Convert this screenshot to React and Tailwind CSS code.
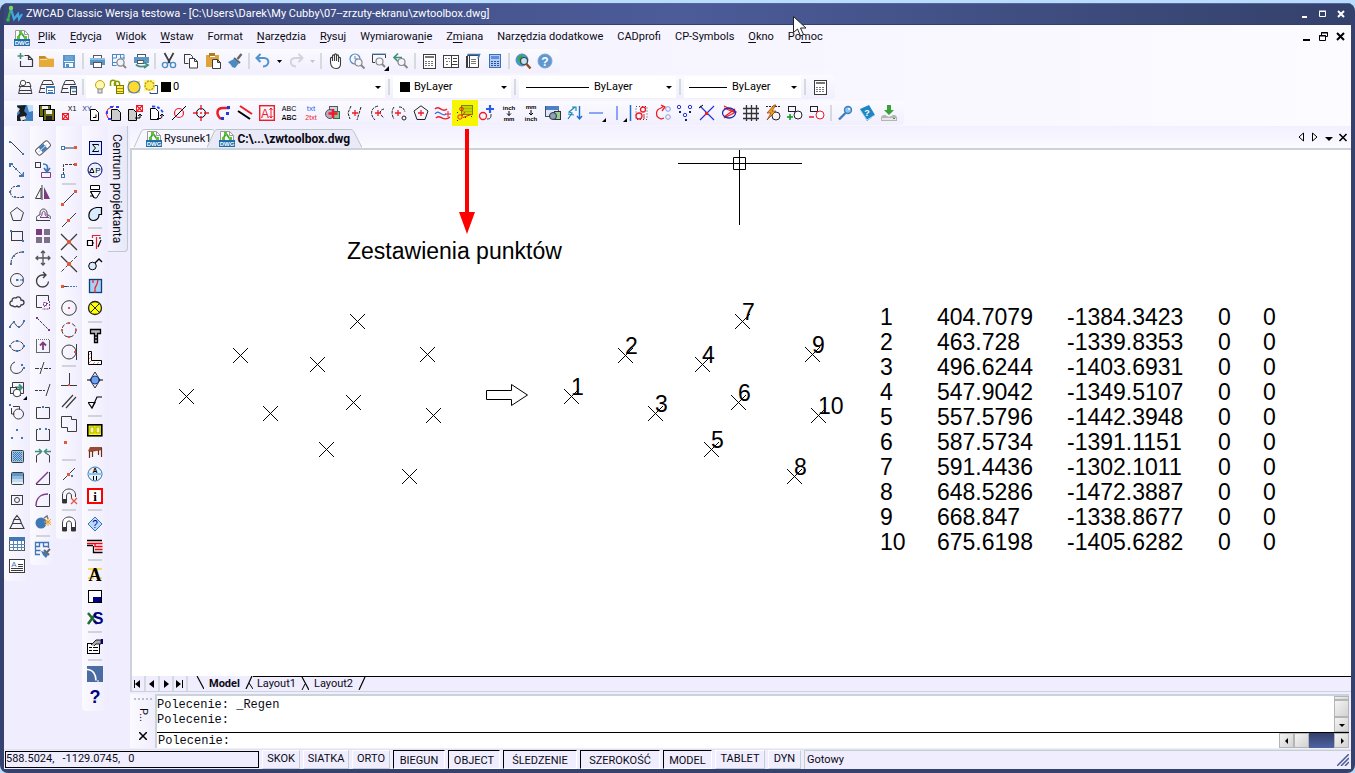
const INK = "#3c3c3c";
const BLUE = "#3f78b5";
const PLUM = "#7d3c82";
const CORAL = "#dd5a3c";
const RED = "#ee1c24";

function P({ d, c = INK, w = 1, f = "none", dash }) {
    return <path d={d} stroke={c} strokeWidth={w} fill={f} strokeDasharray={dash} />;
}

function F({ d, c = INK }) {
    return <path d={d} fill={c} />;
}

function R({ x, y, w = 2, h = w, c = "none", f = "none", s = 1 }) {
    return <rect x={x} y={y} width={w} height={h} stroke={c} strokeWidth={s} fill={f} />;
}

function C({ x, y, r, c = INK, f = "none", w = 1, dash }) {
    return <circle cx={x} cy={y} r={r} stroke={c} strokeWidth={w} fill={f} strokeDasharray={dash} />;
}

function T({ x = 8, y, s, c = "#000", b, serif, children }) {
    return (
        <text
            x={x}
            y={y}
            fontSize={s}
            fill={c}
            textAnchor="middle"
            fontWeight={b ? 700 : 400}
            fontFamily={serif ? "Liberation Serif, serif" : "Liberation Sans, sans-serif"}
        >
            {children}
        </text>
    );
}

// All glyphs are drawn on a 16px grid
const icons = {
    dwg: (
        <>
            <P d="M1.5 .5h9l4 4v11h-13z" c="#9a9a9a" f="#fff" />
            <P d="M10.5 .5v4h4" c="#9a9a9a" />
            <P d="M4 8L7 2.500l4 5.500" c="#3aa535" w={1.8} />
            <F d="M5 1h3v3H5zM10 6h3v3h-3zM3 6h3v3H3z" c="#5cc42e" />
            <R x={0} y={9} w={16} h={7} f="#1e6dad" />
            <T y={15} s={6} c="#fff" b>DWG</T>
        </>
    ),
    logo: (
        <>
            <P d="M5 2L2 14" c="#39b54a" w={2.2} />
            <P d="M5 3l3 10 4-5 1 5 3-5" c="#3fa9e0" w={2.2} />
            <C x={5} y={2} r={2.2} c="none" f="#7ed957" />
            <C x={2} y={14} r={1.8} c="none" f="#39b54a" />
        </>
    ),
    newFile: (
        <>
            <P d="M3.5 8v5.5h12v-7l-4-4h-4M11.5 2.5v4h4" w={1.2} />
            <P d="M3.5 0v6M.5 3h6" c="#3f917b" w={1.6} />
        </>
    ),
    open: (
        <>
            <F d="M0 3h6l2 2h6v2H0z" c="#c98c22" />
            <F d="M0 6l8-1h7v9H0z" c="#e6aa37" />
            <P d="M1 6.5h7l1-1h6" c="#f7dca4" />
        </>
    ),
    save: (
        <>
            <F d="M2 2h12v13H2z" c="#5593c9" />
            <R x={4} y={3} w={8} h={4} f="#6ba5d8" />
            <R x={3} y={8} w={10} h={1} f="#e9f3fb" />
            <R x={4} y={10} w={8} h={4} f="#fff" />
            <R x={5} y={11} w={3} h={3} f="#5593c9" />
        </>
    ),
    print: (
        <>
            <R x={4.5} y={2.5} w={8} h={3} c="#555" f="#fff" />
            <R x={1} y={5} w={15} h={7} f="#5b96c9" />
            <R x={1} y={5} w={15} h={2} f="#8fbce2" />
            <R x={4.5} y={9.5} w={8} h={5} c="#555" f="#fff" />
        </>
    ),
    preview: (
        <>
            <P d="M1.5 1v12M1 1.5h12v5M5.5 1v4h-4M9.5 1v4h4M1 9.5h5M1.5 12.5h4" c="#4b8bc4" />
            <C x={9.5} y={9.5} r={3.6} c="#888" w={1.3} f="#eef4fb" />
            <P d="M12 12l3 3" c="#888" w={2} />
        </>
    ),
    publish: (
        <>
            <R x={4.5} y={1.5} w={8} h={3} c="#555" f="#fff" />
            <R x={1} y={4} w={15} h={6} f="#5b96c9" />
            <R x={4.5} y={7.5} w={6} h={3} c="#555" f="#fff" />
            <P d="M3 11.500c2 3 6 2.500 12 1M10 9l5 3-4 3" c="#3f917b" w={1.8} />
        </>
    ),
    cut: (
        <>
            <P d="M3.500 0l5.500 10M12.500 0L7 10" w={1.7} />
            <C x={4} y={12} r={2.6} c="#4b8bc4" w={1.4} />
            <C x={12} y={12} r={2.6} c="#4b8bc4" w={1.4} />
        </>
    ),
    copy: (
        <>
            <P d="M1.500 1.500h6l2 2v2M1.500 1v9.500h4" />
            <P d="M6.500 5.500h5l3 3v6.500h-8zM11.500 5.500v3h3" f="#fff" />
        </>
    ),
    paste: (
        <>
            <R x={1} y={2} w={13} h={12} f="#e0a23a" />
            <R x={4} y={0} w={6} h={4} f="#b07b22" />
            <R x={5} y={3} w={5} h={1} f="#fff" />
            <P d="M7.500 6.500h5l3 3v6h-8zM12.500 6.500v3h3" f="#fff" />
        </>
    ),
    brush: (
        <>
            <P d="M14.500 1l-4 5" c="#666" w={2.4} />
            <P d="M7 5l6 5" c="#666" w={2} />
            <F d="M1 9l6-3 5 4-4 5-3-1-1-2z" c="#4b8bc4" />
        </>
    ),
    undo: <P d="M5.500 1L1.500 5l4 4M2 5h7c6 0 6 8-1 8.500" c="#4f94cd" w={2} />,
    redo: <P d="M10.500 1l4 4-4 4M14 5H8c-7 0-7 8 0 8.500" c="#d3d3da" w={2} />,
    hand: <P d="M3.500 10V5.500c0-1.500 2-1.500 2 0V8 3c0-1.500 2-1.500 2 0v5-6c0-1.500 2-1.500 2 0v6-5c0-1.500 2-1.500 2 0v6-3.500c0-1.500 2-1.500 2 0V11c0 3-2 4.500-4.500 4.500-4 0-5-2.500-5.500-5.500z" f="#fff" w={1.1} />,
    zoomRt: (
        <>
            <C x={6} y={6} r={5} c="#4b8bc4" w={1.2} />
            <P d="M6 3v3h3" c="#4b8bc4" />
            <C x={9.500} y={9.500} r={3.500} c="#888" w={1.2} f="#f4f4fb" />
            <P d="M12 12l3.500 3.500" c="#888" w={2} />
        </>
    ),
    zoomWin: (
        <>
            <P d="M14.500 5V1.500h-13v8H4" c={INK} />
            <P d="M1 1h14" c="#4b8bc4" />
            <C x={8.500} y={8.500} r={3.500} c="#888" w={1.2} f="#f4f4fb" />
            <P d="M11 11l3 3" c="#888" w={2} />
            <F d="M18 13v5h-5z" c="#000" />
        </>
    ),
    zoomPrev: (
        <>
            <P d="M1 4.500h8M5 .5l-4 4 4 4" c="#3f917b" w={1.7} />
            <C x={8.500} y={9} r={3.500} c="#888" w={1.2} f="#f4f4fb" />
            <P d="M11 11.500l3.500 3.500" c="#888" w={2} />
        </>
    ),
    props: (
        <>
            <R x={2.500} y={1.500} w={12} h={14} c={INK} f="#fff" />
            <P d="M4 4h9" w={2} c="#777" />
            <P d="M4 8.500h9M4 10.500h9M4 12.500h9" dash="2 1" c="#777" />
        </>
    ),
    designCenter: (
        <>
            <R x={.5} y={2.500} w={15} h={12} c={INK} f="#fff" />
            <P d="M8.500 2v13M10 5.500h4M10 8.500h4M8.500 11.500h6" />
            <P d="M2 5.500h5M3 8.500h4M3 11.500h3" c="#777" dash="2 1" />
        </>
    ),
    palette: (
        <>
            <P d="M2.500 2.500h11v12h-11z" f="#fff" />
            <P d="M2.500 1.500h12l-1.500 4" c={BLUE} w={1.6} />
            <P d="M1.500 3v12M4.500 3v11" c={INK} />
            <P d="M6 6.500h5M6 8.500h5M6 10.500h5" c="#777" />
        </>
    ),
    calc: (
        <>
            <R x={2.500} y={1.500} w={11} h={13} c="#3d6fc0" f="#b4cdf4" />
            <R x={4} y={3} w={8} h={3} f="#5e8fdb" />
            <P d="M4 8.500h8M4 10.500h8M4 12.500h8" c="#27519a" dash="2 1" />
        </>
    ),
    globe: (
        <>
            <C x={7} y={7} r={6} c="#6b7fb0" f="#2aa7c9" />
            <F d="M3 4l4-2 2 3-3 4-3-1z" c="#36a653" />
            <C x={9} y={8} r={3.500} c="#444" f="#bfe3f2" w={1.2} />
            <P d="M11.500 11l4 4.500" c="#8a4b23" w={2.400} />
        </>
    ),
    help: (
        <>
            <C x={8} y={8} r={7} c="#7aa8d6" f="#5e98cf" />
            <T y={12.500} s={12} c="#fff" b>?</T>
        </>
    ),
    layerA: (
        <>
            <P d="M9.500 3.500h3l1.500 4H2l1-2M3.500 7.500l-1.500 4h12.500l-1.500-4M2.500 11.500l-1 3h13.500l-1-3" />
            <C x={6} y={4} r={2.700} c="#4a4a4a" f="#fff" />
        </>
    ),
    layerB: (
        <>
            <P d="M4.500 1.500h8l2 4h-12zM2.500 5.500l-1.500 4h5M1.500 9.500L0 13.500h6" />
            <R x={7.500} y={7.500} w={8} h={7} c={BLUE} f="#fff" />
            <P d="M7 8.500h9M9 11.500h5M9 13.500h5" c={BLUE} />
        </>
    ),
    layerC: (
        <>
            <P d="M4.500 1.500h8l2 4h-12zM2.500 5.500l-1.500 4h6M1.500 9.500L0 13.500h8" />
            <R x={9.500} y={7.500} w={6} h={8} c={INK} f="#fff" />
            <P d="M10 9h5M11 12.500h4" c={BLUE} w={1.500} />
        </>
    ),
    bulb: (
        <>
            <C x={8} y={6} r={4.500} c="#c7a300" f="#fff9b0" />
            <R x={6} y={10} w={4} h={4} c="#888" f="#ddd" />
        </>
    ),
    lock: (
        <>
            <P d="M1.500 7V3.500c0-3 5-3 5 0V7M5.500 7V4.500c0-3 5-3 5 0V7" c="#8a9a00" w={1.500} />
            <R x={7.500} y={6.500} w={7} h={8} c="#7a7a00" f="#ffe94d" />
            <P d="M8 9.500h6M8 12.500h6" c="#a69200" />
        </>
    ),
    sun: (
        <>
            <F d="M2 2h12v12H2z" c="#ffe24d" />
            <C x={8} y={8} r={6} c="#4f7fb3" f="#ffd92e" w={1.200} />
        </>
    ),
    freeze: (
        <>
            <R x={1} y={1} w={11} f="#fff3a0" />
            <C x={6.500} y={6.500} r={4.500} c="#b7a500" f="#ffe95c" dash="2 1" w={1.500} />
            <P d="M12 6.500h2.500v8H7V13" c="#2d4c86" />
        </>
    ),
    earthSave: (
        <>
            <R x={0} y={0} w={16} f="#3d7fc2" />
            <F d="M0 1l9-1-2 6 3 3-3 7H0v-5l3-3z" c="#1a1d22" />
            <F d="M10 0h6v6l-4 1z" c="#bfe0f8" />
            <F d="M0 2l3 2-3 4zM3 12l5-1 1 3-5 2z" c="#e8e8e8" />
        </>
    ),
    saveAll: (
        <>
            <R x={.5} y={.5} w={11} h={11} c="#000" f="#6b6b12" />
            <R x={3} y={1} w={6} h={3} f="#eee" />
            <R x={4.500} y={4.500} w={11} h={11} c="#000" f="#6b6b12" />
            <R x={7} y={5} w={6} h={4} f="#eee" />
            <R x={7} y={11} w={6} h={4} f="#222" />
        </>
    ),
    pointX: (
        <>
            <R x={1.500} y={8.500} w={6} c={RED} />
            <P d="M2 9l5 5M7 9l-5 5" c={RED} w={1.300} />
            <T x={11} y={6} s={7}>X1</T>
        </>
    ),
    xyPage: (
        <>
            <T x={4} y={6} s={7} c="#1b2f8f">XY</T>
            <P d="M7.500 4.500h5l3 3v8h-8zM10 12.500h3v-3" f="#fff" c="#000" />
        </>
    ),
    pageCycle: (
        <>
            <P d="M6.500 4.500h6l3 3v8h-9z" c="#000" f="#ccc" />
            <P d="M9 1L3 4 1 8l2 5 4 2" c={RED} />
            <F d="M5 1h3v2H5zM11 1h3v2h-3zM1 6h2v3H1zM3 13h3v2H3z" c="#2645ff" />
        </>
    ),
    pageRed: (
        <>
            <P d="M1.500 4.500h5l3 3v8h-8z" c="#000" f="#ccc" />
            <R x={9.500} y={.5} w={6} c={RED} />
            <P d="M10 1l5 5M15 1l-5 5" c={RED} w={1.300} />
            <P d="M8 13h5v-4M11 11l2-2 2 2" c="#000" />
        </>
    ),
    pageArc: (
        <>
            <P d="M1.500 3.500h5l3 3v8h-8z" c="#000" f="#fff" />
            <P d="M3 1.500c5 0 8 1 11 6" c="#2645ff" w={1.800} dash="3 2" />
            <P d="M8 13.500h3c2 0 2-2 2-4M11 11l2-2 2 2" c="#000" />
        </>
    ),
    slashCircle: (
        <>
            <C x={8} y={8} r={4.500} c={RED} w={1.200} />
            <P d="M1 15L15 1" c="#000" />
        </>
    ),
    target: (
        <>
            <C x={8} y={8} r={4.500} c="#000" />
            <P d="M8 0v5M8 11v5M0 8h5M11 8h5M7 8h2" c={RED} w={1.400} />
        </>
    ),
    arcDots: (
        <>
            <P d="M14 3H8C1 3 1 10 6 14" c={RED} w={2.500} />
            <R x={12} y={1} w={3} f="#1b3bd6" />
            <R x={6} y={12} w={3} f="#1b3bd6" />
            <R x={11} y={7} w={3} f="#1b3bd6" />
        </>
    ),
    twoLines: (
        <>
            <P d="M3 1l12 8" c={RED} w={2} />
            <P d="M1 6l12 8" c="#000" w={2} />
        </>
    ),
    textHeight: (
        <>
            <R x={.7} y={.7} w={14.600} c={RED} s={1.400} />
            <T x={6} y={12.500} s={12} c={RED}>A</T>
            <P d="M12 3v10M10.500 5L12 3l1.500 2M10.500 11l1.500 2 1.500-2" c={RED} />
        </>
    ),
    abc: (
        <>
            <T y={6} s={7}>ABC</T>
            <T y={15} s={7} b>ABC</T>
            <P d="M0 12h16" c="#fff" w={.6} />
        </>
    ),
    txt2txt: (
        <>
            <T y={6} s={8} c="#1f6bf0">txt</T>
            <T y={15} s={7} c={RED}>2txt</T>
        </>
    ),
    shapesPlus: (
        <>
            <R x={4.500} y={1.500} w={8} c="#555" f="#c9d3ea" />
            <C x={5} y={9} r={4.500} c="#555" f="#b9a9c9" />
            <R x={8.500} y={6.500} w={6} h={7} c="#386b46" f="#8fc29b" />
            <P d="M8 4v9M3.500 8.500h9" c={RED} w={2.600} />
        </>
    ),
    plusLine: (
        <>
            <P d="M4 1L1 8l2 6M14 2l-4 13" c="#222" dash="3 1" />
            <P d="M8 5v6M5 8h6" c={RED} w={1.300} />
        </>
    ),
    plusArc: (
        <>
            <P d="M9 1C1 3 1 10 6 15M15 4c-5 1-5 5 0 9" c="#222" dash="3 1" />
            <P d="M9 5v6M6 8h6" c={RED} w={1.300} />
        </>
    ),
    plusPoly: (
        <>
            <P d="M3 2C0 6 1 11 3 14M8 2c4 0 5 2 6 5" c="#222" dash="3 1" />
            <P d="M7 5v6M4 8h6" c={RED} w={1.300} />
            <C x={13} y={13} r={2} c="#222" />
        </>
    ),
    plusPent: (
        <>
            <P d="M8 .8l7 5.200-3 8.500H4L1 6z" c="#222" />
            <P d="M8 5v6M5 8h6" c={RED} w={1.300} />
        </>
    ),
    waves: (
        <>
            <P d="M0 4c4-5 7 5 12 0M1 13c4-5 7 5 14-1" c={RED} w={1.400} />
            <P d="M0 9c4-6 7 4 11 0" c="#3a6be0" w={1.200} />
            <P d="M13 6v6M10 9h6" c={RED} />
        </>
    ),
    pointTable: (
        <>
            <R x={4.500} y={.5} w={11} h={9} c="#77890a" f="#c6d400" />
            <P d="M5 3.500h10M5 6.500h10" c="#a9b800" />
            <C x={3} y={12} r={2.200} c={RED} />
            <C x={4.500} y={4} r={1.800} c={RED} />
            <P d="M5 11l3-4M6 12.500l8-3" c={RED} />
            <F d="M0 7h1v1H0zM8 12h1v1H8zM14 11h1v1h-1zM0 15h1v1H0z" c="#333" />
        </>
    ),
    circPlus: (
        <>
            <C x={4} y={11} r={3.500} c={RED} w={1.300} />
            <P d="M11 0v8M7 4h8" c="#2a5be8" w={2.200} />
            <P d="M8 14c4 0 4-2 4-5" c="#333" />
        </>
    ),
    inchMm: (
        <>
            <T y={5} s={6} b>inch</T>
            <P d="M8 6v4.500M6 8.500l2 2 2-2" c="#000" />
            <T y={16} s={6} b>mm</T>
        </>
    ),
    mmInch: (
        <>
            <T y={4} s={6} b>mm</T>
            <P d="M8 5v5M6 8l2 2 2-2" c="#000" />
            <T y={16} s={6} b>inch</T>
        </>
    ),
    tableShapes: (
        <>
            <R x={.5} y={1.500} w={13} h={10} c="#41506b" f="#dfe8f6" />
            <R x={1} y={1} w={13} h={4} f="#4f7fc8" />
            <R x={9.500} y={6.500} w={6} h={8} c="#333" f="#9c9" />
            <C x={8} y={11} r={3.500} c="#333" f="#8aa1bf" />
        </>
    ),
    zigzag: (
        <>
            <P d="M1 14l4-6-3-1 6-5M1 9l6 1M5 2h4v4" c="#1d87b8" w={1.200} />
            <P d="M12.500 1v12M10 11l2.500 3 2.500-3" c="#1c6fd0" w={1.400} />
        </>
    ),
    hLine: (
        <>
            <P d="M0 8h14" c="#8aa5f5" w={2} />
            <F d="M17 13v4h-4z" c="#000" />
        </>
    ),
    vLine: (
        <>
            <P d="M6 1v14" c="#8aa5f5" w={2} />
            <F d="M16 13v4h-4z" c="#000" />
        </>
    ),
    barCircles: (
        <>
            <P d="M-2.500 0v16" c="#1c6fd0" w={1.500} />
            <P d="M3 1.500h11v13H3z" c="#444" dash="1 2" />
            <C x={10} y={4.500} r={2.500} c={RED} w={1.300} />
            <C x={6} y={11} r={3} c={RED} w={1.300} />
            <P d="M11 9v5" c={RED} />
        </>
    ),
    rotateCircles: (
        <>
            <P d="M9 1l-3 2C0 5 0 12 6 14l3-1M6 0l4 2-3 4" c={RED} w={1.300} />
            <C x={13} y={4} r={2.300} c="#8098ee" />
            <C x={13} y={12} r={2.300} c="#9a9ad0" />
        </>
    ),
    dots: (
        <>
            {[[2, 2], [13, 2], [8, 10]].map(([x, y]) => (
                <C key={`${x}-${y}`} x={x} y={y} r={1.700} c="#2434d8" />
            ))}
            <F d="M2 6h2v2H2zM12 6h2v2h-2zM8 14h2v2H8z" c="#1b1b60" />
        </>
    ),
    crossX: (
        <>
            <P d="M1 1l14 14M15 1L1 15" c="#2434d8" w={1.200} />
            <P d="M0 3l4-3" c="#000" />
            <R x={6} y={7} w={3} f={RED} />
        </>
    ),
    eyeLines: (
        <>
            <P d="M3 1l12 6-12 6M3 3l12 5M3 12l11-8" c={RED} w={1.300} />
            <ellipse cx="8" cy="8" rx="6.500" ry="5" stroke="#1b2fb5" fill="none" strokeWidth="1.300" />
        </>
    ),
    grid: <P d="M3.500 0v16M8.500 0v16M13.500 0v16M0 3.500h16M0 8.500h16M0 13.500h16" c="#333" w={1.300} />,
    flash: (
        <>
            <C x={11} y={11} r={4} c="#222" />
            <P d="M1 1.500h14" c="#222" dash="2 1" />
            <F d="M9 0L2 8h4l-4 7 9-9H7l4-6z" c="#f29c1f" />
            <P d="M9 0L2 8h4l-4 7 9-9H7l4-6z" c="#8a3a10" w={.7} />
        </>
    ),
    addBlock: (
        <>
            <R x={1.500} y={1.500} w={7} h={5} c="#222" dash="2 1" />
            <C x={11} y={10} r={4} c="#222" f="#fff" />
            <P d="M3 9v6M0 12h6" c="#0a9a1c" w={1.500} />
        </>
    ),
    removeBlock: (
        <>
            <R x={1.500} y={1.500} w={7} h={5} c="#222" />
            <C x={11} y={10} r={4} c={RED} f="#fff" />
            <P d="M0 12h5" c={RED} w={1.500} />
        </>
    ),
    key: (
        <>
            <C x={11} y={5} r={3.500} c="#3b7fc0" f="#8cc4f0" w={1.400} />
            <P d="M8.500 8L2 14.500" c="#3b7fc0" w={2.400} />
            <C x={12} y={4} r={1} c="none" f="#fff" />
        </>
    ),
    book: (
        <>
            <F d="M1 4l9-4 6 10-8 6z" c="#1d86c4" />
            <P d="M1 5l7 10 8-5" c="#bfe0f2" />
            <T x={8} y={11} s={9} c="#fff" b>?</T>
        </>
    ),
    download: (
        <>
            <F d="M6 0h4v5h3l-5 5-5-5h3z" c="#36a336" />
            <F d="M2 10h2l4 2 4-2h2l2 2v4H0v-4z" c="#b5b5b5" />
            <R x={1} y={13} w={14} h={2} f="#e8e8e8" />
            <R x={12} y={13} w={2} h={1} f="#2a2" />
        </>
    ),
    line: (
        <>
            <P d="M2 2l12 12" />
            <R x={0} y={1} w={2} f={BLUE} />
            <R x={13} y={13} w={2} f={BLUE} />
        </>
    ),
    ray: (
        <>
            <P d="M1 1l13 13" dash="3 1" />
            <F d="M0 1h4v2H2v2H0zM14 10h1v5h-5v-2h3zM6 6h2v2H6z" c={BLUE} />
        </>
    ),
    polyline: (
        <>
            <P d="M9 2.500H6C0 2.500 0 13.500 6 13.500h8" dash="2 1" />
            <F d="M8 1h3v2H8zM0 7h2v2H0zM5 12h2v2H5zM13 12h2v2h-2z" c={BLUE} />
        </>
    ),
    polygon: <P d="M8 1.500l6.500 5-2.500 8H4l-2.500-8z" />,
    rectangle: (
        <>
            <R x={2.500} y={3.500} w={11} h={9} c={INK} />
            <R x={1} y={2} w={2} f={BLUE} />
            <R x={13} y={12} w={2} f={BLUE} />
        </>
    ),
    arc: (
        <>
            <P d="M2 14C2 6 7 2 14 2" dash="4 1" />
            <F d="M1 13h2v2H1zM4 5h2v2H4zM13 1h2v2h-2z" c={BLUE} />
        </>
    ),
    circle: (
        <>
            <C x={8} y={8} r={6.500} />
            <P d="M8 8h7" c={BLUE} dash="2 1" />
            <F d="M7 7h2v2H7zM13 7h2v2h-2z" c={BLUE} />
        </>
    ),
    cloud: <P d="M4 12c-4 0-4-5-1-5 0-4 3-3 4-3 2-2 5-1 5 2 4 0 4 5 0 5-1 3-3 2-4 1-1 1-3 1-4 0z" w={1.300} />,
    spline: (
        <>
            <P d="M1 11c3-7 5-4 6-2s5 4 8-4" />
            <F d="M0 10h2v2H0zM4 5h2v2H4zM9 10h2v2H9zM14 4h2v2h-2z" c={BLUE} />
        </>
    ),
    ellipse: (
        <>
            <ellipse cx="8" cy="8" rx="6.500" ry="5" stroke={INK} fill="none" strokeDasharray="4 1" />
            <F d="M7 2h2v2H7zM7 12h2v2H7zM0 7h2v2H0zM14 7h2v2h-2z" c={BLUE} />
        </>
    ),
    ellArc: (
        <>
            <P d="M6 2C0 4 0 13 7 13.500c4 0 6-2 7-5" />
            <F d="M12 4h2v2h-2zM14 7h2v2h-2z" c={BLUE} />
        </>
    ),
    insert: (
        <>
            <P d="M3.500 5V.5h11v11h-4M1 5.500h4M8 13.500h4" />
            <P d="M6 5.500h7M10 2.500l3 3-3 3" c="#3f917b" w={2} />
            <R x={1.500} y={5.500} w={6} c={INK} f="#f1effe" />
            <C x={8} y={11} r={3.800} f="#fff" />
            <F d="M18 14v4h-4z" c="#000" />
        </>
    ),
    makeBlock: (
        <>
            <R x={0} y={0} w={2} f={BLUE} />
            <P d="M4 2.500h6.500v3M2.500 4v6h3" />
            <C x={9.500} y={10} r={5} />
        </>
    ),
    points: <F d="M7 3h2v2H7zM2 11h2v2H2zM12 11h2v2h-2z" c={BLUE} />,
    hatch: (
        <>
            <rect x="2.500" y="2.500" width="12" height="12" rx="1" fill="#9cc2e4" stroke={INK} />
            <P d="M4 4.500h9M4 6.500h9M4 8.500h9M4 10.500h9M4 12.500h9" c="#3f78b5" dash="1 1" />
            <P d="M5 5.500h8M5 7.500h8M5 9.500h8M5 11.500h8" c="#3f78b5" dash="1 1" />
        </>
    ),
    gradient: (
        <>
            <rect x="2.500" y="2.500" width="12" height="12" rx="1" fill="#e7f1fa" stroke={INK} />
            <R x={3} y={3} w={11} h={3} f="#5c98cd" />
            <R x={3} y={6} w={11} h={3} f="#8fbade" />
            <R x={3} y={9} w={11} h={3} f="#c0daee" />
        </>
    ),
    region: (
        <>
            <R x={2.500} y={3.500} w={11} h={9} c={INK} />
            <C x={8} y={8} r={2.500} />
        </>
    ),
    boundary: <P d="M8 1.500l3 4H5zM5 5.500L3.500 9.500h9L11 5.500M3.500 9.500L1 14.500h14l-2.500-5" w={1.100} />,
    table: (
        <>
            <R x={.5} y={1.500} w={15} h={13} c="#555" f="#fff" />
            <R x={0} y={1} w={16} h={4} f={BLUE} />
            <P d="M0 8.500h16M0 11.500h16M4.500 5v10M8.500 5v10M12.500 5v10" c="#5a86b5" />
        </>
    ),
    mtext: (
        <>
            <R x={.5} y={1.500} w={15} h={13} c={INK} f="#fff" />
            <T x={5} y={9} s={8} c={BLUE}>A</T>
            <P d="M9 6.500h5M9 8.500h5M2 10.500h12M2 12.500h12" />
        </>
    ),
    erase: (
        <g transform="rotate(-42 8 8)">
            <rect x="0" y="4.500" width="16" height="7" rx="2" fill="#fff" stroke="#555" />
            <R x={5} y={5} w={6} f={BLUE} />
            <P d="M2 8h11" c="#bcd4ea" />
        </g>
    ),
    copyObj: (
        <>
            <R x={.5} y={.5} w={5} c={INK} />
            <P d="M6.500 15.500v-5h9v5h-9" c={PLUM} />
            <P d="M8 2c5 0 5 3 4 7M9 6l3 4 3-4" c={BLUE} w={1.700} />
        </>
    ),
    mirror: (
        <>
            <P d="M7 1v15M6 4L.5 14.500H6z" />
            <F d="M9 3l6 12H9z" c={PLUM} />
        </>
    ),
    offset: (
        <>
            <P d="M1 14.500h14M2 14c-2-4 2-5 3-5-1-8 8-8 7 0 3 0 4 2 3 4" />
            <P d="M5 11.500h9M5 11c1-1 2-1 2-3 0-4 4-3 3 0 0 2 1 2 3 2.500" c={PLUM} />
        </>
    ),
    array: (
        <>
            <R x={1} y={1} w={6} f={PLUM} />
            <F d="M9 1h6v6H9zM1 9h6v6H1zM9 9h6v6H9z" c="#7d6f87" />
        </>
    ),
    move: <P d="M8 1v14M1 8h14M6 3l2-2 2 2M6 13l2 2 2-2M3 6L1 8l2 2M13 6l2 2-2 2" c="#555" w={1.300} />,
    rotate: <P d="M13.500 9.500A6 6 0 1 1 7 3h3M8 0l3 3-3 3" w={1.300} />,
    scale: (
        <>
            <P d="M7 13.500H1.500v-12h12V7" />
            <P d="M8.500 8.500h3v3h-3zM14.500 7v8H7" c={PLUM} dash="2 1" />
            <P d="M9 13l4-4" c={PLUM} />
        </>
    ),
    stretch: (
        <>
            <P d="M2 2l12 12" dash="3 1" />
            <R x={1} y={1} w={2} f={PLUM} />
            <R x={13} y={13} w={2} f={PLUM} />
        </>
    ),
    lengthen: (
        <>
            <R x={1.500} y={1.500} w={13} h={13} c="#666" />
            <P d="M2 1.500h13" c="#fff" dash="1 1" />
            <P d="M8 12V6M5 7.500L8 4.500l3 3" c={PLUM} w={1.800} />
        </>
    ),
    trim: (
        <>
            <P d="M9 2L5 14" />
            <P d="M0 8.500h6M9 8.500h7" dash="4 1" />
        </>
    ),
    extend: (
        <>
            <P d="M15 2l-4 12" />
            <P d="M0 8.500h10" dash="3 1" />
        </>
    ),
    breakPt: (
        <>
            <P d="M6 3.500H1.500v11h13v-11H10" />
            <R x={7} y={2} f={BLUE} />
        </>
    ),
    breakTwo: (
        <>
            <P d="M3 3.500H1.500v11h13v-11H13" />
            <F d="M4 2h2v2H4zM10 2h2v2h-2z" c={BLUE} />
        </>
    ),
    join: (
        <>
            <P d="M1.500 14.500V7.500L6 4.500M14.500 14.500V7.500L10 4.500" />
            <P d="M0 3.500h6M4 1l2.500 2.500L4 6M16 3.500h-6M12 1L9.500 3.500 12 6" c="#3f917b" w={1.600} />
        </>
    ),
    chamfer: (
        <>
            <P d="M14.500 2v12.500H1" />
            <P d="M1 14L13 2" c={PLUM} w={1.400} />
        </>
    ),
    fillet: (
        <>
            <P d="M14.500 2v12.500H1" />
            <P d="M1 14C1 6 6 2 13 2" c={PLUM} w={1.400} />
        </>
    ),
    explode: (
        <>
            <C x={6} y={9} r={5.500} c="none" f="#3f78b5" />
            <P d="M9 4l3-2 1 3" c="#777" w={1.500} />
            <P d="M10 5l6 6M16 5l-6 6M13 4v8M9 8h7" c="#f0a52a" />
        </>
    ),
    matchProp: (
        <>
            <P d="M5 12.500H.5V.5h13V6M.5 4.500h4v-4M8.500 .5v4h5M.5 8.500h5" c={BLUE} w={1.300} />
            <P d="M15 7l-3 3M9 8l5 5" c="#666" w={2} />
            <F d="M6 9l4 1 3 3-2 3-3-3z" c={BLUE} />
        </>
    ),
    snapH: (
        <>
            <P d="M1 8h14" />
            <R x={.5} y={6.500} w={3} c={BLUE} f="#fff" />
            <R x={13} y={6} w={3} f={CORAL} />
        </>
    ),
    snapCorner: (
        <>
            <P d="M2.500 13V2.500H13" dash="3 1" />
            <R x={13} y={1} w={3} f={CORAL} />
            <R x={.5} y={12.500} w={3} c={BLUE} f="#fff" />
        </>
    ),
    endpoint: (
        <>
            <P d="M2 14L14 2" />
            <F d="M0 13h3v3H0zM13 0h3v3h-3z" c={CORAL} />
        </>
    ),
    midpoint: (
        <>
            <P d="M1 15L15 1" />
            <R x={6} y={7} w={3} f={CORAL} />
        </>
    ),
    intersect: (
        <>
            <P d="M0 0l16 16M16 0L0 16" w={1.300} />
            <R x={6} y={6} w={4} f={CORAL} />
        </>
    ),
    apparent: (
        <>
            <P d="M0 0l16 16" w={1.300} />
            <P d="M16 0L0 16" dash="4 2" />
            <R x={6} y={6} w={4} f={CORAL} />
        </>
    ),
    extension: (
        <>
            <P d="M1 8.500h5" />
            <P d="M6 8.500h10" c={BLUE} dash="2 1" />
            <R x={0} y={7} w={3} f={CORAL} />
        </>
    ),
    center: (
        <>
            <C x={8} y={8} r={7.300} />
            <R x={7} y={7} f={CORAL} />
        </>
    ),
    quadrant: (
        <>
            <C x={8} y={8} r={7} dash="4 2" />
            <F d="M7 0h2v2H7zM7 14h2v2H7zM0 7h2v2H0zM14 7h2v2h-2z" c={CORAL} />
        </>
    ),
    tangent: (
        <>
            <C x={8} y={8} r={7} />
            <P d="M15.500 0v16" />
            <R x={13} y={7} f={CORAL} />
        </>
    ),
    perp: (
        <>
            <P d="M8.500 1v12M0 13.500h16" />
            <R x={7} y={12} f={CORAL} />
        </>
    ),
    parallel: <P d="M1 13L12 1M5 14L15 3" w={1.200} />,
    shapes: <P d="M.5 .5h10v3h5v12h-9v-4h-6z" />,
    node: <R x={3} y={3} w={3} f={CORAL} />,
    nearest: (
        <>
            <P d="M2 14L14 2" />
            <R x={6} y={7} w={3} f={CORAL} />
            <R x={10} y={9} f={BLUE} />
        </>
    ),
    magnetOff: (
        <>
            <P d="M5.500 15h-4V7c0-8 13-8 13 0v2M5.500 15V8c0-4 5-4 5 0v3" />
            <R x={2} y={11} w={4} f="#333" />
            <P d="M10 10l6 6M16 10l-6 6" c={CORAL} w={1.300} />
        </>
    ),
    magnet: (
        <>
            <P d="M1.500 15V7c0-8 13-8 13 0v8h-4V8c0-4-5-4-5 0v7z" f="#fff" />
            <F d="M2 11h4v4H2zM10 11h4v4h-4z" c="#333" />
        </>
    ),
    sigma: (
        <>
            <R x={2.500} y={1.500} w={12} h={13} c="#000080" f="#d8ecff" s={1} />
            <P d="M11.500 5.500v-1h-6l3 3.500-3 3.500h6v-1" c="#000" />
        </>
    ),
    pressure: (
        <>
            <C x={8} y={8} r={7} c="#000080" f="#e8f2ff" />
            <P d="M2.500 10.500L5 6l2 4.500z" c="#000" />
            <T x={11} y={11} s={8}>P</T>
        </>
    ),
    funnel: <P d="M3.500 1.500h9v4h-9zM3.500 7.500h10L9.500 14h-2zM3.500 7.500L7 14M3 12h3" c="#000" f="#fff" />,
    pump: <P d="M14.500 1.500h-5C0 3 0 14.500 6 14.500c6 0 6-4 6-6h2.500z" c="#000" f="#d9ecff" w={1.200} />,
    valve: (
        <>
            <P d="M5.500 4V1.500h8M9.500 3v12" c={RED} w={1.200} />
            <P d="M.5 6.500h5v5h-5zM5 9h2M11 13l3-7M12 4h2" c="#000" f="#fff" w={1.200} />
        </>
    ),
    sensor: (
        <>
            <C x={5.500} y={10} r={3.800} c="#000" f="#d9ecff" />
            <P d="M8 7l4-4 3 3" c="#000" w={1.300} />
        </>
    ),
    breaker: (
        <>
            <R x={2.500} y={1.500} w={12} h={13} c="#0b3f78" f="#a9d0f2" s={1.300} />
            <P d="M6 2v3M11 2l-1 4-2 4v5" c={RED} w={1.200} />
        </>
    ),
    lamp: (
        <>
            <C x={8} y={8} r={6.500} c="#222" f="#ff0" w={1.300} />
            <P d="M3.500 3.500l9 9M12.500 3.500l-9 9" c="#222" />
        </>
    ),
    bolt: <P d="M3.500 1.500h10v4h-3v9h-3v-9h-4zM7 8h4M7 11h4" c="#000" f="#b8b8b8" w={1.300} />,
    profile: (
        <>
            <P d="M1.500 1.500h3v9h10v4h-13z" c="#000" f="#fff" />
            <P d="M2 5l2-2M2 9l2-2M2 13l2-2M6 14l2-2M10 14l2-2" c="#e58a8a" />
        </>
    ),
    diamondDot: (
        <>
            <P d="M8 0l5 8-5 8-5-8z" c="#333" f="#eee" />
            <C x={8} y={8} r={4} c="#1b3d8a" f="#6ea2f0" />
            <P d="M0 8h4M12 8h4" c="#000" />
        </>
    ),
    surface: <P d="M1 8.500h7L5 14 1.500 9M5 14L10 3h5" c="#000" w={1.200} />,
    windowY: (
        <>
            <R x={.8} y={2.800} w={14} h={11} c="#000" f="#ff0" s={1.600} />
            <R x={3} y={5} w={4} h={6} c="#aa0" f="#f3f3a0" />
            <R x={9} y={5} w={4} h={6} c="#aa0" f="#f3f3a0" />
        </>
    ),
    desk: (
        <>
            <F d="M3 3h12v3l-11 2-3-1z" c="#9a4a34" />
            <P d="M2.500 7v7M5.500 7v6M14.500 4v9M11.500 6v5" c="#6b2d1e" w={1.200} />
        </>
    ),
    aPause: (
        <>
            <C x={8} y={8} r={7} c="#3571a6" f="#e6f2fc" />
            <R x={1} y={7} w={14} h={2} f="#8ec2ec" />
            <T y={7} s={7} b>A</T>
            <P d="M6.500 10v4M9.500 10v4" c="#000" />
        </>
    ),
    info: (
        <>
            <R x={1} y={1} w={14} c="#f00" f="#fff" s={2} />
            <T y={13} s={13} b serif>i</T>
        </>
    ),
    ask: (
        <>
            <P d="M8 1l7 7-7 7-7-7z" c="#3b72b0" f="#b9dcff" />
            <T y={12} s={10} c="#000080">?</T>
        </>
    ),
    pipes: (
        <>
            <P d="M0 2.500h15M6.500 8v6.500h9M0 7.500h6" c="#000" w={1.300} />
            <P d="M0 5.500h8v3h7.500M7 5.500h8.500M8 11.500h7.500" c="#f00" w={1.300} />
        </>
    ),
    fontA: (
        <>
            <P d="M1 3h5v9H1M15 3h-5v9h5" c="#ffcf2e" w={1.600} />
            <T y={15} s={18} b serif>A</T>
        </>
    ),
    corner: (
        <>
            <R x={1.500} y={2.500} w={13} h={12} c="#000" f="#fff" />
            <R x={6} y={9} w={8} h={5} f="#000080" />
        </>
    ),
    excel: (
        <>
            <P d="M1 3l9 11M9 3L1 14" c="#226b35" w={2.500} />
            <T x={11} y={14} s={16} c="#000080" b>S</T>
        </>
    ),
    checklist: (
        <>
            <R x={.5} y={5.500} w={12} h={10} c="#000" f="#fff" />
            <P d="M2 9.500h3M6 9.500h5M2 12.500h3M6 12.500h5" c="#000" />
            <P d="M4 7l5-5h5v4H9L7 8" c="#222" f="#aaa" />
            <R x={14} y={1} w={2} h={5} f="#000080" />
        </>
    ),
    logoArc: (
        <>
            <R x={0} y={0} w={16} f="#4b6ba3" />
            <P d="M0 3.500c6 0 9 5 9 11" c="#fff" w={1.600} />
            <P d="M10 15h2" c="#fff" />
        </>
    ),
    question: <T y={15} s={18} c="#000080" b>?</T>,
};

function Icon({ name, className = "h-4 w-4" }) {
    return (
        <svg viewBox="0 0 16 16" className={`overflow-visible shrink-0 ${className}`} aria-hidden="true">
            {icons[name]}
        </svg>
    );
}

function ToolButton({ name, active = false }) {
    return (
        <button
            type="button"
            aria-label={name}
            className={`flex h-[22px] w-[22px] shrink-0 items-center justify-center ${active ? "bg-[#f6f600] outline-2 outline-[#f6f600]" : ""}`}
        >
            <Icon name={name} />
        </button>
    );
}

function Sep({ className = "mx-[2px]" }) {
    return <span className={`h-4 w-[2px] shrink-0 bg-[#d5dadf] ${className}`} />;
}

function Caret({ muted = false }) {
    return (
        <button type="button" aria-label="history" className="flex w-[11px] shrink-0 justify-center">
            <svg viewBox="0 0 5 3" className={`h-[3px] w-[5px] ${muted ? "fill-[#c4c4cc]" : "fill-black"}`}>
                <path d="M0 0h5L2.500 3z" />
            </svg>
        </button>
    );
}

const menu = [
    ["", "P", "lik"],
    ["", "E", "dycja"],
    ["Wi", "d", "ok"],
    ["", "W", "staw"],
    ["Format", "", ""],
    ["", "N", "arzędzia"],
    ["", "R", "ysuj"],
    ["Wymiarowa", "n", "ie"],
    ["Z", "m", "iana"],
    ["Narzędzia dodatkowe", "", ""],
    ["CADprofi", "", ""],
    ["CP-Symbols", "", ""],
    ["", "O", "kno"],
    ["Po", "m", "oc"],
];

const standardBar = [
    "newFile", "open", "save", "|", "print", "preview", "publish", "|", "cut", "copy", "paste", "brush", "|",
    "undo", "v", "redo", "vMuted", "|", "hand", "zoomRt", "zoomWin", "zoomPrev", "|",
    "props", "designCenter", "palette", "calc", "|", "globe", "help",
];

const toolboxBar = [
    "earthSave", "saveAll", "pointX", "xyPage", "pageCycle", "pageRed", "pageArc", "slashCircle", "target",
    "arcDots", "twoLines", "textHeight", "abc", "txt2txt", "shapesPlus", "plusLine", "plusArc", "plusPoly",
    "plusPent", "waves", "pointTable", "circPlus", "inchMm", "mmInch", "tableShapes", "zigzag", "hLine",
    "vLine", "barCircles", "rotateCircles", "dots", "crossX", "eyeLines", "grid", "flash", "addBlock",
    "removeBlock", "|", "key", "book", "download",
];

const sideBars = [
    [
        "line", "ray", "polyline", "polygon", "rectangle", "arc", "circle", "cloud", "spline", "ellipse",
        "ellArc", "insert", "makeBlock", "points", "hatch", "gradient", "region", "boundary", "table", "mtext",
    ],
    [
        "erase", "copyObj", "mirror", "offset", "array", "move", "rotate", "scale", "stretch", "lengthen",
        "trim", "extend", "breakPt", "breakTwo", "join", "chamfer", "fillet", "explode", "|", "matchProp",
    ],
    [
        "snapH", "snapCorner", "|", "endpoint", "midpoint", "intersect", "apparent", "extension", "center",
        "quadrant", "tangent", "|", "perp", "parallel", "shapes", "node", "|", "nearest", "magnetOff", "|", "magnet",
    ],
    [
        "sigma", "pressure", "funnel", "pump", "|", "valve", "sensor", "breaker", "lamp", "|", "bolt",
        "profile", "diamondDot", "surface", "|", "windowY", "desk", "aPause", "info", "|", "ask", "pipes", "|",
        "fontA", "corner", "excel", "|", "checklist", "|", "logoArc", "question",
    ],
];

function ToolBar({ items }) {
    return (
        <div className="flex h-[26px] items-center">
            <div className="flex h-6 items-center rounded-r bg-gradient-to-b from-[#fbfaff] to-[#f1effd] pr-1 pl-[10px]">
                {items.map((item, i) => {
                    if (item === "|") return <Sep key={i} />;
                    if (item === "v" || item === "vMuted") return <Caret key={i} muted={item === "vMuted"} />;
                    return <ToolButton key={i} name={item} active={item === "pointTable"} />;
                })}
            </div>
        </div>
    );
}

function Combo({ label, value, className, pad, children }) {
    return (
        <div className={`relative flex h-[22px] items-center bg-white ${className}`}>
            <select aria-label={label} className={`h-full w-full appearance-none bg-transparent text-[11px] text-black outline-none ${pad}`}>
                <option>{value}</option>
            </select>
            <div className="pointer-events-none absolute inset-y-0 left-0 flex items-center">{children}</div>
            <svg viewBox="0 0 6 3" className="pointer-events-none absolute right-1 h-[3px] w-[6px] fill-black">
                <path d="M0 0h6L3 3z" />
            </svg>
        </div>
    );
}

function PropertiesBar() {
    return (
        <div className="flex h-[26px] items-center">
            <div className="flex h-6 items-center rounded-r bg-gradient-to-b from-[#fbfaff] to-[#f1effd] pr-1 pl-[10px]">
                <ToolButton name="layerA" />
                <ToolButton name="layerB" />
                <ToolButton name="layerC" />
                <Sep />
                <Combo label="Layer" value="0" className="w-[299px]" pad="pl-[87px]">
                    <div className="flex items-center gap-px pl-[6px]">
                        <Icon name="bulb" />
                        <Icon name="lock" />
                        <Icon name="sun" />
                        <Icon name="freeze" />
                        <span className="ml-px h-[10px] w-[10px] bg-black" />
                    </div>
                </Combo>
                <Sep className="mx-[3px]" />
                <Combo label="Color" value="ByLayer" className="w-[118px]" pad="pl-[21px]">
                    <span className="ml-[7px] h-[10px] w-[10px] bg-black" />
                </Combo>
                <Sep className="mx-[3px]" />
                <Combo label="Linetype" value="ByLayer" className="w-[157px]" pad="pl-[75px]">
                    <span className="ml-[7px] h-px w-[63px] bg-black" />
                </Combo>
                <Sep className="mx-[3px]" />
                <Combo label="Lineweight" value="ByLayer" className="w-[117px]" pad="pl-[48px]">
                    <span className="ml-[5px] h-px w-[38px] bg-black" />
                </Combo>
                <Sep className="mx-[3px]" />
                <ToolButton name="props" />
            </div>
        </div>
    );
}

function SideBars() {
    return (
        <aside className="flex w-[126px] shrink-0 items-start">
            {sideBars.map((items, col) => (
                <div key={col} className="flex w-[26px] flex-col items-center rounded-b bg-gradient-to-r from-[#fbfaff] to-[#efedfd] pt-[11px] pb-1">
                    {items.map((item, i) =>
                        item === "|" ? (
                            <span key={i} className="my-[2px] h-[2px] w-[14px] bg-[#d0d4da]" />
                        ) : (
                            <ToolButton key={i} name={item} />
                        )
                    )}
                </div>
            ))}
            <button
                type="button"
                className="h-[126px] w-5 rounded-br border-r border-b border-[#bfc8d4] bg-gradient-to-r from-[#f4f2ff] to-[#e9e8f6] text-xs leading-5 [writing-mode:vertical-rl]"
            >
                Centrum projektanta
            </button>
        </aside>
    );
}

function DocTab({ title, active = false }) {
    const fill = active ? "#e9e9f7" : "#f8f7ff";
    return (
        <button type="button" className={`flex h-[19px] ${active ? "-ml-4" : ""}`}>
            <svg viewBox="0 0 12 19" className="h-[19px] w-3" aria-hidden="true">
                <path d="M0 18.500L7 3C8 1 9 .5 12 .5V19H0z" fill={fill} />
                <path d="M0 18.500L7 3C8 1 9 .5 12 .5" fill="none" stroke="#b9c6c9" />
            </svg>
            <span className={`flex h-full items-center gap-[2px] border-t border-[#b9c6c9] ${active ? "bg-[#e9e9f7] text-xs font-bold" : "bg-[#f8f7ff] text-[11px]"}`}>
                <Icon name="dwg" />
                {title}
            </span>
            <svg viewBox="0 0 12 19" className="h-[19px] w-3" aria-hidden="true">
                <path d="M0 .5c2 0 3 .5 4 2.500l8 15.500V19H0z" fill={fill} />
                <path d="M0 .5c2 0 3 .5 4 2.500l8 15.500" fill="none" stroke="#b9c6c9" />
            </svg>
        </button>
    );
}

function DocTabs() {
    return (
        <div className="flex h-[22px] items-end justify-between bg-gradient-to-b from-[#f2f0ff] to-[#fafaff] pl-1">
            <div className="flex">
                <DocTab title="Rysunek1" />
                <DocTab title="C:\...\zwtoolbox.dwg" active />
            </div>
            <div className="flex h-full items-center gap-1 pr-[3px]">
                <button type="button" aria-label="Previous">
                    <svg viewBox="0 0 10 10" className="h-[10px] w-[10px]"><path d="M7.500 1v8L3 5z" fill="#fff" stroke="#000" /></svg>
                </button>
                <button type="button" aria-label="Next">
                    <svg viewBox="0 0 10 10" className="h-[10px] w-[10px]"><path d="M2.500 1v8L7 5z" fill="#fff" stroke="#000" /></svg>
                </button>
                <button type="button" aria-label="List">
                    <svg viewBox="0 0 10 10" className="h-[10px] w-[10px]"><path d="M1 5h8L5 9z" /></svg>
                </button>
                <button type="button" aria-label="Close drawing">
                    <svg viewBox="0 0 10 10" className="h-[10px] w-[10px]"><path d="M1.500 2l7 7M8.500 2l-7 7" stroke="#000" strokeWidth="1.600" /></svg>
                </button>
            </div>
        </div>
    );
}

const basePoints = [
    [54, 246], [108, 205], [138, 263], [185, 214], [194, 299],
    [221, 252], [225, 171], [277, 326], [295, 204], [301, 265],
];
const COPY_DX = 385;

const rows = [
    ["1", "404.7079", "-1384.3423", "0", "0"],
    ["2", "463.728", "-1339.8353", "0", "0"],
    ["3", "496.6244", "-1403.6931", "0", "0"],
    ["4", "547.9042", "-1349.5107", "0", "0"],
    ["5", "557.5796", "-1442.3948", "0", "0"],
    ["6", "587.5734", "-1391.1151", "0", "0"],
    ["7", "591.4436", "-1302.1011", "0", "0"],
    ["8", "648.5286", "-1472.3887", "0", "0"],
    ["9", "668.847", "-1338.8677", "0", "0"],
    ["10", "675.6198", "-1405.6282", "0", "0"],
];

function Drawing() {
    const all = [...basePoints, ...basePoints.map(([x, y]) => [x + COPY_DX, y])];
    return (
        <div className="relative min-h-[527px] flex-1 border-t-2 border-l-2 border-[#c9d3d9] bg-white font-['Liberation_Sans',sans-serif] text-[23px] leading-[25px] text-black">
            <svg className="absolute inset-0 h-full w-full" aria-hidden="true">
                <g stroke="#000" fill="none">
                    {all.map(([x, y]) => (
                        <path key={`${x}-${y}`} d={`M${x - 7} ${y - 7}l15 15M${x + 8} ${y - 7}l-15 15`} />
                    ))}
                    <path d="M546 13.500h124M607.500 0v75" />
                    <path d="M601.500 7.500h12v12h-12z" />
                    <path d="M354.500 240.500h25v-6l16 10.500-16 10.500v-6h-25z" />
                </g>
            </svg>
            {/* call-out from the highlighted toolbar button */}
            <svg viewBox="0 0 16 108" className="absolute -top-6 left-[327px] z-10 h-[108px] w-4" aria-hidden="true">
                <path d="M6 3h4v83h6l-8 22-8-22h6z" fill="#ff0000" />
            </svg>
            <p className="absolute top-[89px] left-[215px] whitespace-nowrap">Zestawienia punktów</p>
            {basePoints.map(([x, y], i) => (
                <span key={i} className="absolute" style={{ left: x + COPY_DX, top: y - 21 }}>
                    {i + 1}
                </span>
            ))}
            <table className="absolute top-[155px] left-[748px]">
                <tbody>
                    {rows.map((row) => (
                        <tr key={row[0]}>
                            <td className="w-[57px] p-0">{row[0]}</td>
                            <td className="w-[130px] p-0">{row[1]}</td>
                            <td className="w-[151px] p-0">{row[2]}</td>
                            <td className="w-[45px] p-0">{row[3]}</td>
                            <td className="w-4 p-0">{row[4]}</td>
                        </tr>
                    ))}
                </tbody>
            </table>
        </div>
    );
}

function Slash({ flip = false, cross = false }) {
    return (
        <svg viewBox="0 0 8 13" className="h-[13px] w-2" aria-hidden="true">
            <path d={flip ? "M1 0l7 13" : "M7 0L1 13"} stroke="#000" strokeWidth="1.200" />
            {cross ? <path d={flip ? "M4 7L1 13" : "M4 7l4 6"} stroke="#000" /> : null}
        </svg>
    );
}

function LayoutTabs() {
    const nav = [
        ["First layout", "M6 0v8L1 4zM0 0h1v8H0z"],
        ["Previous layout", "M6 0v8L1 4z"],
        ["Next layout", "M2 0v8l5-4z"],
        ["Last layout", "M0 0v8l5-4zM6 0h1v8H6z"],
    ];
    return (
        <div className="flex h-4 items-center border-b border-l-2 border-[#c9d3d9]">
            {nav.map(([label, d]) => (
                <button key={label} type="button" aria-label={label} className="flex h-full w-[14px] items-center justify-center border-r-2 border-[#d4d9de]">
                    <svg viewBox="0 0 8 8" className="h-2 w-2"><path d={d} /></svg>
                </button>
            ))}
            <div className="flex h-full items-start gap-[5px] pl-2 text-[11px] leading-[15px]">
                <Slash flip />
                <button type="button" className="font-bold">Model</button>
                <Slash cross />
            </div>
            <div className="flex h-full flex-1 items-start gap-[5px] border-t border-black pl-1 text-[11px] leading-[14px]">
                <button type="button">Layout1</button>
                <Slash flip cross />
                <button type="button">Layout2</button>
                <Slash />
            </div>
        </div>
    );
}

function ScrollButton({ d, label, className }) {
    return (
        <button type="button" aria-label={label} className={`flex items-center justify-center border border-[#b5b5b5] bg-gradient-to-br from-[#f4f4f4] to-[#d2d2d2] ${className}`}>
            {d ? <svg viewBox="0 0 6 6" className="h-[6px] w-[6px]"><path d={d} /></svg> : null}
        </button>
    );
}

function CommandPanel() {
    return (
        <div className="mt-[2px] mb-px flex h-[54px] pr-[2px]">
            <div className="flex w-[25px] shrink-0 flex-col items-center bg-gradient-to-r from-[#fafaff] to-[#f0eefd] pt-1">
                <span className="w-[18px] border-t-2 border-dotted border-[#b9c1c8]" />
                <span className="mt-2 h-5 text-[11px] leading-3 [writing-mode:vertical-rl]">P...</span>
                <button type="button" aria-label="Close panel" className="mt-1">
                    <svg viewBox="0 0 8 8" className="h-2 w-2"><path d="M0 0l8 8M8 0L0 8" stroke="#000" strokeWidth="1.500" /></svg>
                </button>
            </div>
            <div className="flex min-w-0 flex-1 flex-col border-t-2 border-l-2 border-[#c9d3d9] bg-white font-['Liberation_Mono',monospace] text-xs">
                <div className="flex min-h-0 flex-1">
                    <div className="min-w-0 flex-1 pt-[2px] leading-[15px]">
                        <p className="whitespace-pre">Polecenie: _Regen</p>
                        <p>Polecenie:</p>
                    </div>
                    <div className="flex w-[15px] flex-col">
                        <ScrollButton label="Scroll up" className="h-1" />
                        <ScrollButton label="Scroll track" className="flex-1" />
                        <ScrollButton label="Scroll down" d="M0 2h6L3 5z" className="h-[15px]" />
                    </div>
                </div>
                <div className="flex h-4 border-t border-black">
                    <label htmlFor="command" className="pl-[1px] leading-4">Polecenie:</label>
                    <input id="command" type="text" className="min-w-0 flex-1 bg-transparent outline-none" />
                    <div className="flex">
                        <ScrollButton label="Scroll left" d="M4 0v6L1 3z" className="w-[15px]" />
                        <ScrollButton label="Scroll thumb" className="w-[15px]" />
                        <span className="w-[25px] bg-gradient-to-b from-[#33406c] to-[#5063a3]" />
                        <ScrollButton label="Scroll right" d="M2 0v6l3-3z" className="w-[15px]" />
                    </div>
                </div>
            </div>
        </div>
    );
}

const modes = [
    ["SKOK", false, "w-[38px]"],
    ["SIATKA", false, "w-[46px]"],
    ["ORTO", false, "w-[38px]"],
    ["BIEGUN", true, "w-[52px]"],
    ["OBJECT", true, "w-[52px]"],
    ["ŚLEDZENIE", true, "w-[74px]"],
    ["SZEROKOŚĆ", true, "w-[80px]"],
    ["MODEL", true, "w-[49px]"],
    ["TABLET", false, "w-[50px]"],
    ["DYN", false, "w-[33px]"],
];

function StatusBar() {
    return (
        <footer className="flex h-5 items-center gap-[3px] border-t border-[#e2e2ec] bg-[#f0eefe] pl-px text-[11px]">
            <div className="flex h-[17px] w-[254px] shrink-0 items-center border border-black whitespace-pre">588.5024,   -1129.0745,   0</div>
            {modes.map(([label, on, width]) => (
                <button
                    key={label}
                    type="button"
                    aria-pressed={on}
                    className={`h-[19px] shrink-0 border ${width} ${on ? "border-t-black border-r-white border-b-white border-l-black pt-[2px]" : "border-t-white border-r-[#c4cfd0] border-b-[#c4cfd0] border-l-white"}`}
                >
                    {label}
                </button>
            ))}
            <div className="flex h-[19px] flex-1 items-center justify-between border-t border-l border-[#c4cfd0] pl-[2px]">
                <span>Gotowy</span>
                <svg viewBox="0 0 12 12" className="mr-[2px] h-3 w-3" aria-hidden="true">
                    <path d="M0 12L12 0M4 12l8-8M8 12l4-4" stroke="#4a5a95" strokeWidth="1.500" />
                </svg>
            </div>
        </footer>
    );
}

function TitleBar() {
    return (
        <header className="flex h-[22px] items-center justify-between border-t border-b border-t-[#55649f] border-b-[#33406e] bg-gradient-to-r from-[#3a477a] via-[#4c5c99] to-[#34416b] pr-[6px] pl-[2px]">
            <div className="flex items-center gap-1">
                <Icon name="logo" />
                <h1 className="pt-px text-[11px] text-white">
                    ZWCAD Classic Wersja testowa - [C:\Users\Darek\My Cubby\07--zrzuty-ekranu\zwtoolbox.dwg]
                </h1>
            </div>
            <div className="flex gap-[10px]">
                <button type="button" aria-label="Minimize">
                    <svg viewBox="0 0 8 8" className="h-2 w-2"><path d="M1 6h5v2H1z" fill="#fff" /></svg>
                </button>
                <button type="button" aria-label="Maximize">
                    <svg viewBox="0 0 8 8" className="h-2 w-2"><path d="M.5 1.500h6v5h-6zM0 1h7" fill="none" stroke="#fff" /></svg>
                </button>
                <button type="button" aria-label="Close">
                    <svg viewBox="0 0 8 8" className="h-2 w-2"><path d="M1 1l6 6M7 1L1 7" stroke="#fff" strokeWidth="2" /></svg>
                </button>
            </div>
        </header>
    );
}

function MenuBar() {
    return (
        <nav className="flex h-[23px] items-center justify-between pr-[6px] pl-[10px]">
            <div className="flex items-center gap-[14px] pt-[2px] text-[11px]">
                <Icon name="dwg" className="-mr-[6px] h-4 w-4" />
                {menu.map(([before, key, after]) => (
                    <button key={before + key + after} type="button" className="whitespace-nowrap">
                        {before}
                        {key ? <span className="underline underline-offset-2">{key}</span> : null}
                        {after}
                    </button>
                ))}
            </div>
            <div className="flex gap-2">
                <button type="button" aria-label="Minimize drawing">
                    <svg viewBox="0 0 9 9" className="h-[9px] w-[9px]"><path d="M1 7h7v2H1z" /></svg>
                </button>
                <button type="button" aria-label="Restore drawing">
                    <svg viewBox="0 0 9 9" className="h-[9px] w-[9px]">
                        <path d="M2.500 3V.5h6v4H7M2 1h7M.5 3.500h6v5h-6zM0 4h7" fill="none" stroke="#000" />
                    </svg>
                </button>
                <button type="button" aria-label="Close drawing window">
                    <svg viewBox="0 0 9 9" className="h-[9px] w-[9px]"><path d="M1 1l7 7M8 1L1 8" stroke="#000" strokeWidth="2" /></svg>
                </button>
            </div>
        </nav>
    );
}

function Pointer() {
    return (
        <svg viewBox="0 0 14 22" className="pointer-events-none absolute top-4 left-[793px] h-[22px] w-[14px]" aria-hidden="true">
            <path d="M.5 .5v16l4-3.500 3 7 3-1.500-3-6.500h5.500z" fill="#fff" stroke="#222" />
        </svg>
    );
}

export default function App() {
    return (
        <div className="relative flex min-h-screen flex-col bg-[#b9dcfb] pt-[3px] font-[Roboto,sans-serif] text-[#0a0a14]">
            <div className="flex flex-1 flex-col overflow-hidden rounded-lg bg-[#35426f] px-1 pb-1">
                <TitleBar />
                <div className="bg-gradient-to-r from-[#f1effe] to-[#fcfbff]">
                    <MenuBar />
                    <ToolBar items={standardBar} />
                    <PropertiesBar />
                    <ToolBar items={toolboxBar} />
                </div>
                <div className="flex flex-1 bg-[#f0eefe]">
                    <SideBars />
                    <main className="flex min-w-0 flex-1 flex-col">
                        <DocTabs />
                        <Drawing />
                        <LayoutTabs />
                        <CommandPanel />
                    </main>
                </div>
                <StatusBar />
            </div>
            <Pointer />
        </div>
    );
}
